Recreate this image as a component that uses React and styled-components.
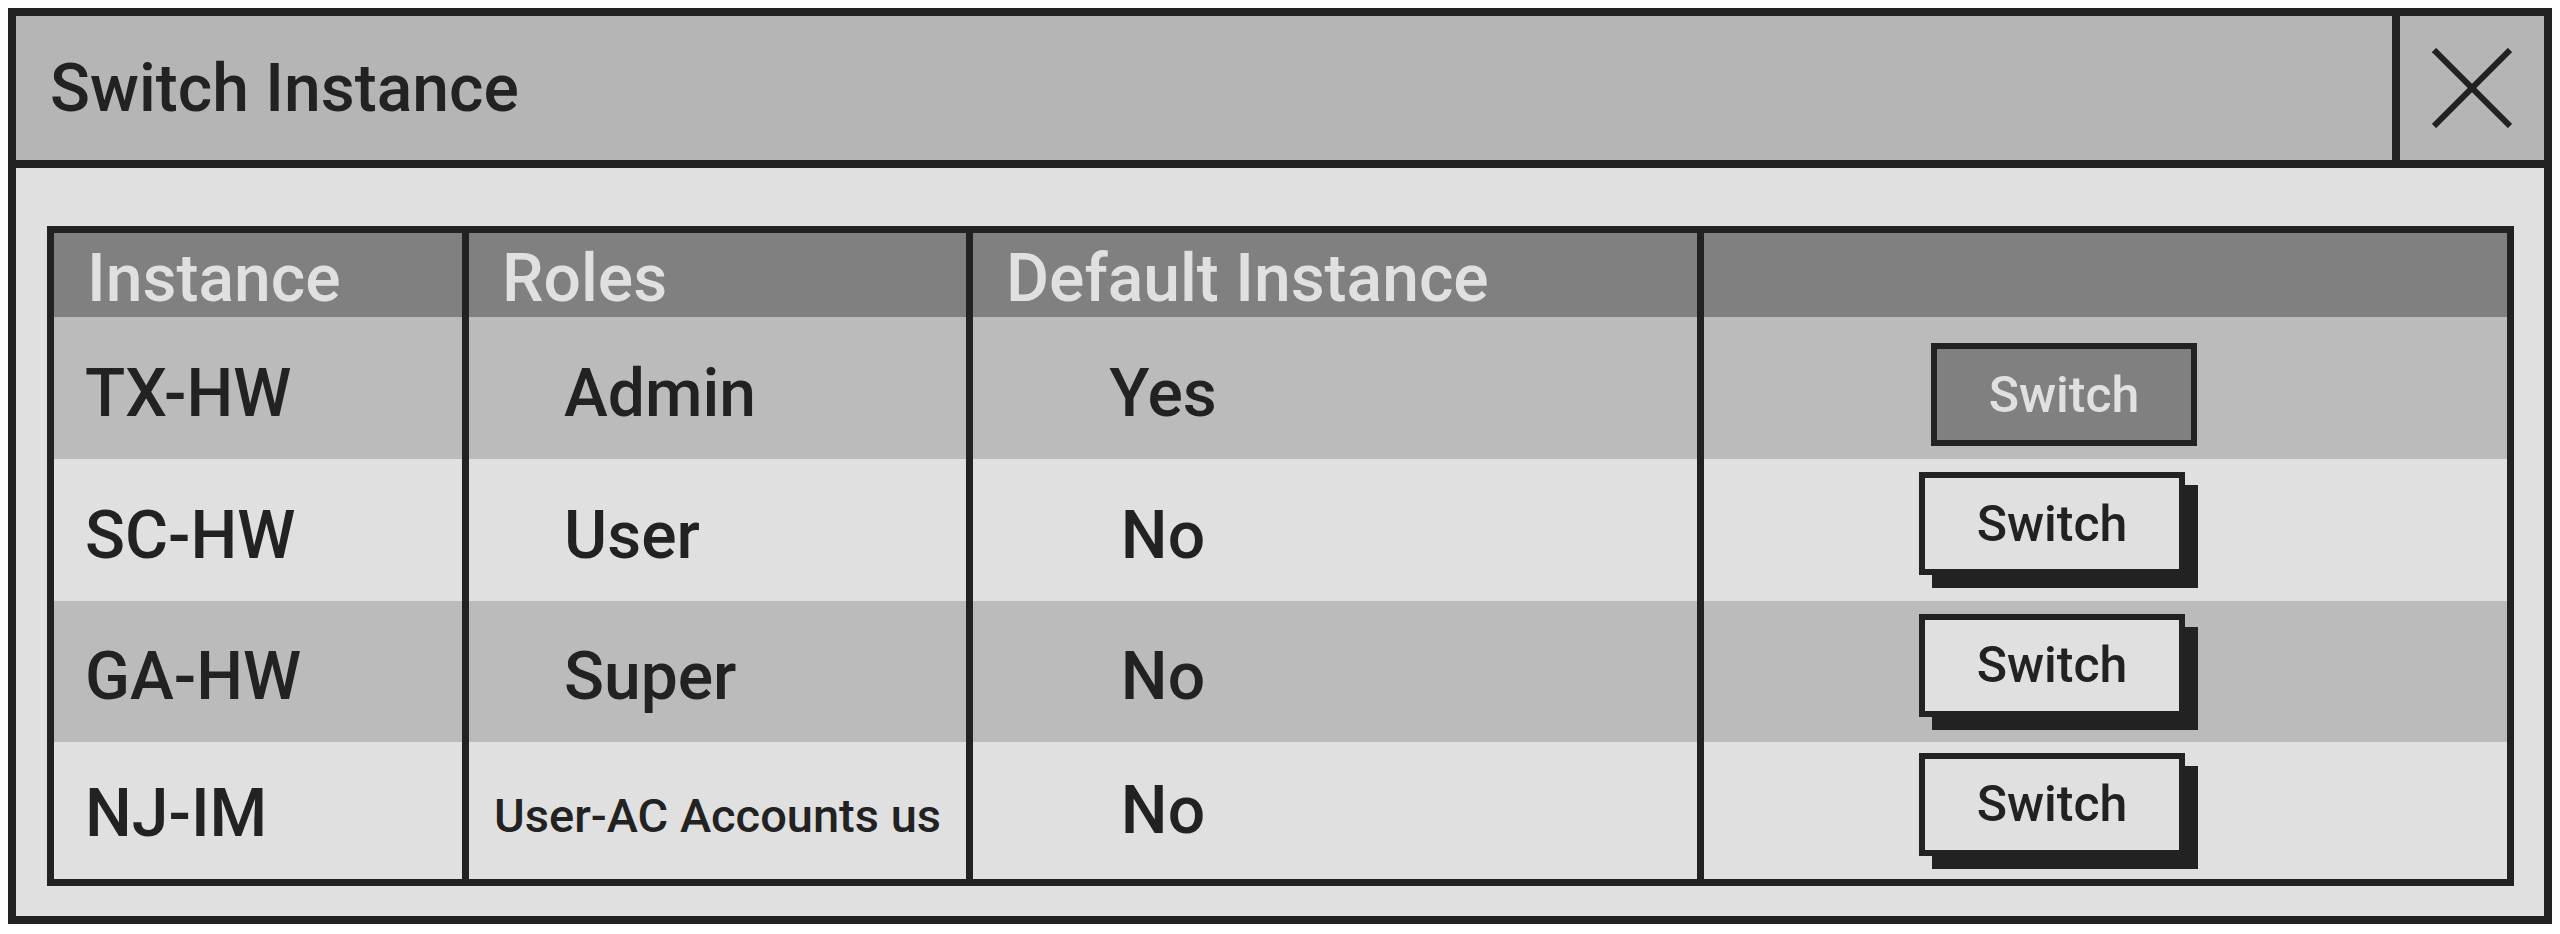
import React from "react";
import styled, { createGlobalStyle } from "styled-components";

const Global = createGlobalStyle`
  html, body {
    margin: 0;
    background: #ffffff;
  }
  body {
    margin: 8px;
    font-family: Roboto, "Liberation Sans", Arial, sans-serif;
    color: #222222;
  }
`;

const Dialog = styled.section`
  display: flex;
  flex-direction: column;
  border: 8px solid #222222;
  background: #e0e0e0;
`;

const Header = styled.header`
  display: flex;
  align-items: stretch;
  height: 144px;
  background: #b5b5b5;
  border-bottom: 8px solid #222222;
`;

const Title = styled.h1`
  flex: 1;
  display: flex;
  align-items: center;
  margin: 0;
  padding-left: 34px;
  font-size: 66px;
  font-weight: 500;
  color: #222222;
`;

const CloseButton = styled.button`
  width: 152px;
  display: flex;
  align-items: center;
  justify-content: center;
  padding: 0;
  background: #b5b5b5;
  border: none;
  border-left: 8px solid #222222;
  cursor: pointer;
`;

const Body = styled.div`
  padding: 58px 30px 30px 31px;
`;

const Table = styled.div`
  display: flex;
  flex-direction: column;
  border: 7px solid #222222;
`;

const Row = styled.div`
  display: grid;
  grid-template-columns: 415px 504px 731px 1fr;
  height: ${(p) => p.$height}px;
  background: ${(p) => p.$bg};
`;

const HeadCell = styled.div`
  display: flex;
  align-items: center;
  padding: 6px 0 0 33px;
  font-size: 66px;
  font-weight: 500;
  color: #e0e0e0;
  border-right: ${(p) => (p.$last ? "none" : "7px solid #222222")};
`;

const Cell = styled.div`
  display: flex;
  align-items: center;
  justify-content: ${(p) => p.$justify || "flex-start"};
  padding-left: ${(p) => p.$pad || 0}px;
  padding-top: ${(p) => p.$shift || 0}px;
  font-size: ${(p) => p.$size || 66}px;
  font-weight: 500;
  color: #222222;
  white-space: nowrap;
  overflow: hidden;
  border-right: ${(p) => (p.$last ? "none" : "7px solid #222222")};
`;

const CenterBox = styled.span`
  display: block;
  width: ${(p) => p.$width}px;
  text-align: center;
`;

const SwitchButton = styled.button`
  width: 266px;
  height: 103px;
  margin-bottom: 13px;
  padding: 0;
  border: 6px solid #222222;
  background: ${(p) => (p.$active ? "#808080" : "#e0e0e0")};
  color: ${(p) => (p.$active ? "#e0e0e0" : "#222222")};
  font-family: Roboto, "Liberation Sans", Arial, sans-serif;
  font-size: 50px;
  font-weight: 500;
  box-shadow: ${(p) => (p.$active ? "none" : "13px 13px 0 #222222")};
  transform: ${(p) => (p.$active ? "translate(12px, 13px)" : "none")};
  cursor: pointer;
`;

const rows = [
  { name: "TX-HW", role: "Admin", def: "Yes", active: true, bg: "#bbbbbb", h: 142, shift: 10, defShift: 10 },
  { name: "SC-HW", role: "User", def: "No", bg: "#e0e0e0", h: 142, shift: 10, defShift: 10 },
  { name: "GA-HW", role: "Super", def: "No", bg: "#bbbbbb", h: 141, shift: 10, defShift: 10 },
  { name: "NJ-IM", role: "User-AC Accounts us", compact: true, def: "No", bg: "#e0e0e0", h: 137, shift: 6, defShift: 0 },
];

function CloseIcon() {
  return (
    <svg width="80" height="80" viewBox="0 0 80 80">
      <line x1="2" y1="2" x2="78" y2="78" stroke="#222222" strokeWidth="6" />
      <line x1="78" y1="2" x2="2" y2="78" stroke="#222222" strokeWidth="6" />
    </svg>
  );
}

export default function App() {
  return (
    <>
      <Global />
      <Dialog>
        <Header>
          <Title>Switch Instance</Title>
          <CloseButton aria-label="Close">
            <CloseIcon />
          </CloseButton>
        </Header>
        <Body>
          <Table>
            <Row $height={84} $bg="#808080">
              <HeadCell>Instance</HeadCell>
              <HeadCell>Roles</HeadCell>
              <HeadCell>Default Instance</HeadCell>
              <HeadCell $last />
            </Row>
            {rows.map((r) => (
              <Row key={r.name} $height={r.h} $bg={r.bg}>
                <Cell $pad={31} $shift={r.shift}>{r.name}</Cell>
                {r.compact ? (
                  <Cell $size={47} $justify="center" $shift={r.shift + 4}>{r.role}</Cell>
                ) : (
                  <Cell $pad={95} $shift={r.shift}>{r.role}</Cell>
                )}
                <Cell $shift={r.defShift}>
                  <CenterBox $width={380}>{r.def}</CenterBox>
                </Cell>
                <Cell $last $pad={215}>
                  <SwitchButton $active={r.active}>Switch</SwitchButton>
                </Cell>
              </Row>
            ))}
          </Table>
        </Body>
      </Dialog>
    </>
  );
}
